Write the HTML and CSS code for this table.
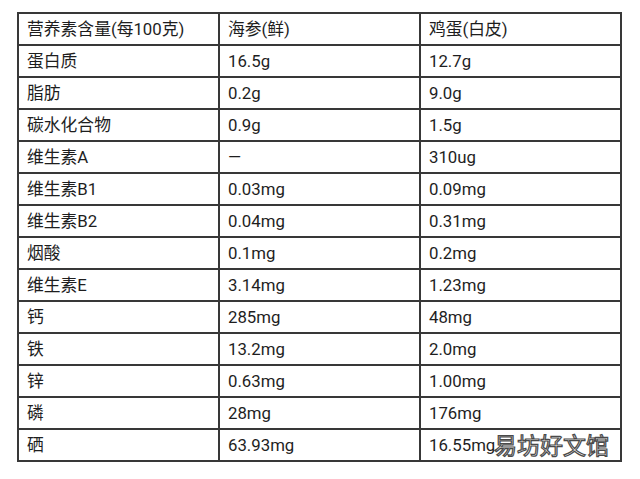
FILE: index.html
```html
<!DOCTYPE html>
<html lang="zh">
<head>
<meta charset="utf-8">
<link rel="stylesheet" href="styles.css">
</head>
<body>
<div class="wrap">
<table class="nutri">
<tr><td>营养素含量(每100克)</td><td>海参(鲜)</td><td>鸡蛋(白皮)</td></tr>
<tr><td>蛋白质</td><td>16.5g</td><td>12.7g</td></tr>
<tr><td>脂肪</td><td>0.2g</td><td>9.0g</td></tr>
<tr><td>碳水化合物</td><td>0.9g</td><td>1.5g</td></tr>
<tr><td>维生素A</td><td>—</td><td>310ug</td></tr>
<tr><td>维生素B1</td><td>0.03mg</td><td>0.09mg</td></tr>
<tr><td>维生素B2</td><td>0.04mg</td><td>0.31mg</td></tr>
<tr><td>烟酸</td><td>0.1mg</td><td>0.2mg</td></tr>
<tr><td>维生素E</td><td>3.14mg</td><td>1.23mg</td></tr>
<tr><td>钙</td><td>285mg</td><td>48mg</td></tr>
<tr><td>铁</td><td>13.2mg</td><td>2.0mg</td></tr>
<tr><td>锌</td><td>0.63mg</td><td>1.00mg</td></tr>
<tr><td>磷</td><td>28mg</td><td>176mg</td></tr>
<tr><td>硒</td><td>63.93mg</td><td>16.55mg</td></tr>
</table>
<div class="mark">易坊好文馆</div>
</div>
</body>
</html>
```

FILE: styles.css
```css
html, body {
  margin: 0;
  padding: 0;
  background: #ffffff;
}
body {
  font-family: Roboto, "Noto Sans CJK SC", sans-serif;
  color: #1e1e1e;
}
.wrap {
  position: relative;
  padding: 12px 0 0 17px;
  width: 640px;
  height: 479px;
  box-sizing: border-box;
}
.nutri {
  border-collapse: collapse;
  table-layout: fixed;
  width: 605px;
}
.nutri td {
  border: 2px solid #383838;
  height: 30px;
  padding: 0 0 0 8px;
  font-size: 16.8px;
  line-height: 30px;
  vertical-align: middle;
  white-space: nowrap;
  overflow: visible;
}
.mark {
  position: absolute;
  left: 494px;
  top: 429px;
  font-family: "Noto Sans CJK SC", sans-serif;
  font-size: 23px;
  line-height: 30px;
  color: #ffffff;
  -webkit-text-stroke: 1.2px #4a4a4a;
}
```
